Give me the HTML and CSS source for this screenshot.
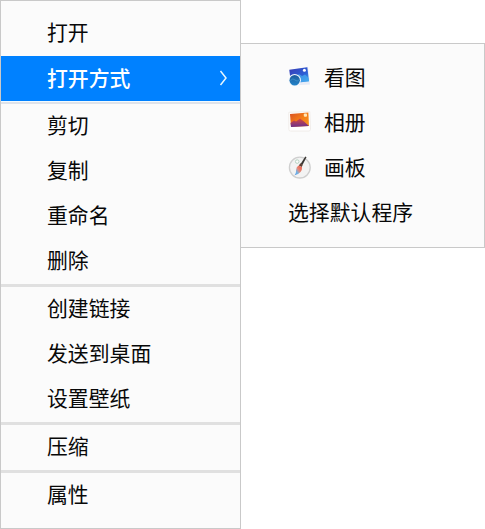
FILE: index.html
```html
<!DOCTYPE html>
<html lang="zh-CN">
<head>
<meta charset="utf-8">
<title>右键菜单</title>
<link rel="stylesheet" href="styles.css">
</head>
<body>
<div class="menus">
  <ul class="menu menu-main">
    <li class="item">打开</li>
    <li class="item active"><span>打开方式</span>
      <svg class="chevron" width="10" height="18" viewBox="0 0 10 18"><path d="M1.5 2 L7 9 L1.5 16"/></svg>
    </li>
    <li class="separator"></li>
    <li class="item">剪切</li>
    <li class="item">复制</li>
    <li class="item">重命名</li>
    <li class="item">删除</li>
    <li class="separator"></li>
    <li class="item">创建链接</li>
    <li class="item">发送到桌面</li>
    <li class="item">设置壁纸</li>
    <li class="separator"></li>
    <li class="item">压缩</li>
    <li class="separator"></li>
    <li class="item">属性</li>
  </ul>
  <ul class="menu menu-sub">
    <li class="item">
      <svg class="icon" width="24" height="24" viewBox="0 0 24 24">
        <defs>
          <linearGradient id="view-sky" x1="0" y1="0" x2="1" y2="1"><stop offset="0" stop-color="#3a3cb4"/><stop offset=".6" stop-color="#2c5fd6"/><stop offset="1" stop-color="#43b4f2"/></linearGradient>
          <linearGradient id="view-lens" x1="0" y1="0" x2="0" y2="1"><stop offset="0" stop-color="#1e5c9c"/><stop offset="1" stop-color="#2383c8"/></linearGradient>
        </defs>
        <path d="M1 5 L20 1.8 L22 19.5 L4 20.5Z" fill="#e6ebf6"/>
        <path d="M1.3 4.8 L19.3 2.2 L21 16.2 L3 18.4Z" fill="url(#view-sky)"/>
        <path d="M7 12 L11 9 L14 11 L17 9.5 L20.6 13 L21 16.2 L9 17.6Z" fill="#45a9ed" opacity=".75"/>
        <circle cx="16.4" cy="5.2" r="1.5" fill="#fff"/>
        <circle cx="6.7" cy="15.2" r="6.2" fill="#f4f8fc"/>
        <circle cx="6.7" cy="15.2" r="5.2" fill="url(#view-lens)"/>
        <path d="M2.5 15.5 Q5 12.5 7 15 T11.5 14.5" stroke="#4fa7d9" stroke-width="1" fill="none" opacity=".5"/>
      </svg>
      <span>看图</span>
    </li>
    <li class="item">
      <svg class="icon" width="24" height="24" viewBox="0 0 24 24">
        <defs>
          <linearGradient id="album-sky" x1="0" y1="0" x2="1" y2="1"><stop offset="0" stop-color="#d84e23"/><stop offset=".5" stop-color="#f47d18"/><stop offset="1" stop-color="#f69a22"/></linearGradient>
          <linearGradient id="album-hill" x1="0" y1="0" x2="0" y2="1"><stop offset="0" stop-color="#d9483c"/><stop offset="1" stop-color="#69308f"/></linearGradient>
        </defs>
        <path d="M.8 2.3 L21.8 1.7 L22.5 19.4 Q22.4 21 21 21 L2.4 21 Q1 21 .9 19.5Z" fill="#fff" stroke="#eee8e5" stroke-width=".8"/>
        <path d="M2 3.9 L20.4 2.4 L21 16 L3 17Z" fill="url(#album-sky)"/>
        <path d="M2.5 13 L6 10.5 L8 11.5 L12 8.5 L16 11.5 L21 16 L3 17Z" fill="url(#album-hill)"/>
        <rect x="15.8" y="3.5" width="3.2" height="3.2" rx="1" fill="#ffe7b8"/>
      </svg>
      <span>相册</span>
    </li>
    <li class="item">
      <svg class="icon" width="24" height="24" viewBox="0 0 24 24">
        <defs>
          <linearGradient id="brush-tip" x1="1" y1="0" x2="0" y2="1"><stop offset="0" stop-color="#f0523c"/><stop offset=".45" stop-color="#e58a79"/><stop offset=".7" stop-color="#70b4e8"/><stop offset="1" stop-color="#5792e0"/></linearGradient>
        </defs>
        <circle cx="11.8" cy="12.6" r="10.4" fill="#f3f3f3" stroke="#cfcfcf" stroke-width="1.3"/>
        <circle cx="9.2" cy="6.6" r="1.8" fill="#fbfbfb" stroke="#a8cdb8" stroke-width=".8"/>
        <path d="M17.3 1.5 L18.5 2.2 L14.6 9.7 L12.7 8.7Z" fill="#393633"/>
        <path d="M12.3 8.3 L14.8 9.7 L13.7 11.9 L10.9 10.4Z" fill="#5a4034"/>
        <path d="M10.6 10.6 L14 12.3 Q14.6 18.2 6.6 20.2 Q8.4 17.5 8.1 15 Q8.2 12 10.6 10.6Z" fill="url(#brush-tip)"/>
      </svg>
      <span>画板</span>
    </li>
    <li class="item">选择默认程序</li>
  </ul>
</div>
</body>
</html>
```
FILE: styles.css
```css
* {
  box-sizing: border-box;
}

body {
  margin: 0;
  background: #fff;
  color: #080808;
  font-family: "Noto Sans CJK SC", sans-serif;
  font-size: 20.85px;
}

.menus {
  display: flex;
  align-items: flex-start;
}

.menu {
  margin: 0;
  list-style: none;
  background: #fbfbfb;
  border: 1px solid #c9c9c9;
}

.menu-main {
  width: 241px;
  padding: 10px 0;
}

.menu-sub {
  width: 244px;
  margin-top: 43px;
  padding: 12px 0 11px;
  border-left: 0;
}

.item {
  display: flex;
  align-items: center;
  height: 45px;
  padding: 0 0 4px 46px;
  line-height: 41px;
  white-space: nowrap;
}

.menu-sub .item {
  padding-left: 47px;
}

.item.active {
  justify-content: space-between;
  padding-right: 11px;
  padding-bottom: 2px;
  background: #0081ff;
  color: #fff;
  font-weight: 500;
}

.chevron {
  fill: none;
  stroke: #e4f6ff;
  stroke-width: 1.5;
}

.separator {
  height: 3px;
  background: #e0e0e0;
}

.active + .separator {
  background: #dfe3ea;
  border-top: 1px solid #f2fbff;
}

.icon {
  flex: none;
  margin-right: 12px;
}
```
